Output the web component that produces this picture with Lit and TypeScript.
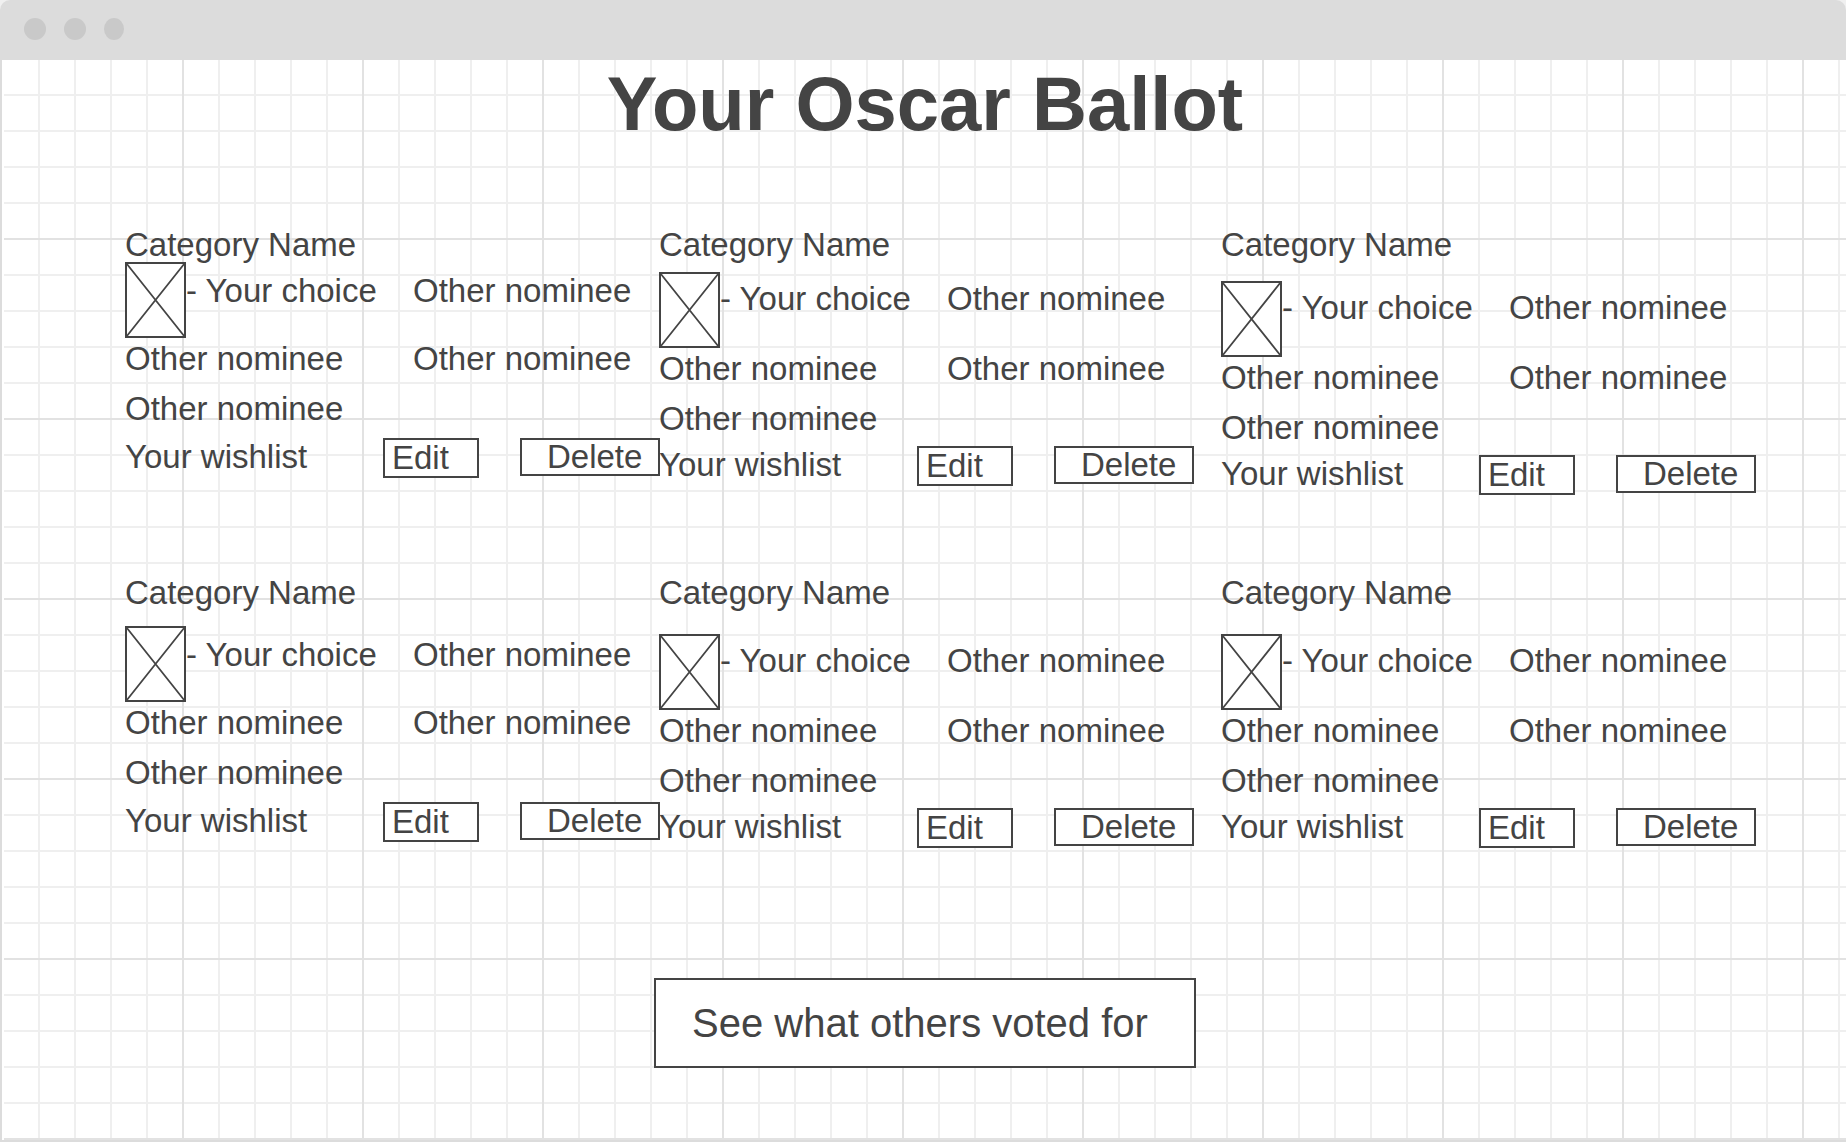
import { LitElement, html, css } from "lit";
import { customElement, property } from "lit/decorators.js";

type Spacing = "tight" | "close" | "medium" | "roomy" | "wide";

interface Category {
  name: string;
  spacing: Spacing;
}

const CATEGORIES: Category[] = [
  { name: "Category Name", spacing: "tight" },
  { name: "Category Name", spacing: "close" },
  { name: "Category Name", spacing: "roomy" },
  { name: "Category Name", spacing: "medium" },
  { name: "Category Name", spacing: "wide" },
  { name: "Category Name", spacing: "wide" },
];

@customElement("ballot-card")
export class BallotCard extends LitElement {
  @property() name = "";
  @property() spacing: Spacing = "close";

  static styles = css`
    :host {
      display: block;
      min-width: 0;
      font-size: 33px;
      line-height: 38px;
      white-space: nowrap;
    }
    .name {
      margin: 0;
      font-size: inherit;
      font-weight: 400;
      line-height: 32px;
    }
    .body.tight { padding-top: 1px; }
    .body.close { padding-top: 11px; }
    .body.medium { padding-top: 17px; }
    .body.roomy { padding-top: 20px; }
    .body.wide { padding-top: 25px; }
    .nominees {
      display: grid;
      grid-template-columns: 288px auto;
      justify-content: start;
      row-gap: 12px;
    }
    .top {
      margin-bottom: 2px;
    }
    .choice {
      display: flex;
    }
    .thumb {
      display: block;
      flex: none;
      width: 61px;
      height: 76px;
    }
    .text {
      margin: 0;
    }
    .top .text,
    .actions {
      padding-top: 8px;
    }
    .tight .top .text,
    .medium .top .text,
    .tight .actions,
    .medium .actions {
      padding-top: 10px;
    }
    .actions {
      display: flex;
      align-items: flex-start;
    }
    .wishlist {
      flex: none;
      width: 258px;
    }
    button {
      flex: none;
      box-sizing: border-box;
      margin: 0;
      border: 2px solid #444;
      border-radius: 0;
      background: #fff;
      color: inherit;
      font: inherit;
      text-align: left;
      cursor: pointer;
    }
    .edit {
      width: 96px;
      margin-right: 41px;
      padding: 0 0 0 7px;
      line-height: 36px;
    }
    .delete {
      width: 140px;
      padding: 0 0 0 25px;
      line-height: 34px;
    }
  `;

  render() {
    return html`
      <h2 class="name">${this.name}</h2>
      <div class="body ${this.spacing}">
        <div class="nominees top">
          <div class="choice">
            <svg class="thumb" viewBox="0 0 61 76" aria-hidden="true">
              <rect x="1" y="1" width="59" height="74" fill="#fff" stroke="#444" stroke-width="2" />
              <path d="M1.5 1.5 59.5 74.5M59.5 1.5 1.5 74.5" fill="none" stroke="#444" stroke-width="1.8" />
            </svg>
            <p class="text">- Your choice</p>
          </div>
          <p class="text">Other nominee</p>
        </div>
        <div class="nominees">
          <p class="text">Other nominee</p>
          <p class="text">Other nominee</p>
          <p class="text">Other nominee</p>
        </div>
        <div class="actions">
          <span class="wishlist">Your wishlist</span>
          <button class="edit" type="button">Edit</button>
          <button class="delete" type="button">Delete</button>
        </div>
      </div>
    `;
  }
}

@customElement("app-root")
export class AppRoot extends LitElement {
  static styles = css`
    :host {
      display: flex;
      flex-direction: column;
      min-height: 100vh;
      background: #f0f0f0;
      color: #444;
      font-family: "Liberation Sans", Arial, sans-serif;
    }
    .bar {
      height: 60px;
      border-radius: 10px 10px 0 0;
      background: #dcdcdc;
    }
    .dots {
      display: block;
      width: 140px;
      height: 60px;
    }
    .canvas {
      flex: 1;
      display: flex;
      flex-direction: column;
      align-items: center;
      padding-left: 2px;
      border-left: 2px solid #dcdcdc;
      border-bottom: 2px solid #dcdcdc;
      background:
        linear-gradient(#fff, #fff) 0 0 / 2px 100% no-repeat,
        linear-gradient(90deg, #e2e2e2 2px, transparent 2px) 0 0 / 180px 180px,
        linear-gradient(#e2e2e2 2px, transparent 2px) 0 -2px / 180px 180px,
        linear-gradient(90deg, #efefef 2px, transparent 2px) 0 0 / 36px 36px,
        linear-gradient(#efefef 2px, transparent 2px) 0 -2px / 36px 36px,
        #fff;
    }
    .title {
      margin: 0;
      font-size: 76px;
      font-weight: 700;
      line-height: 88px;
    }
    .categories {
      align-self: stretch;
      display: grid;
      grid-template-columns: minmax(0, 534fr) minmax(0, 562fr) minmax(0, 625fr);
      row-gap: 82px;
      padding: 81px 0 130px 121px;
    }
    .others {
      margin: 0;
      padding: 0 46px 0 36px;
      border: 2px solid #444;
      border-radius: 0;
      background: #fff;
      color: inherit;
      font: inherit;
      font-size: 40px;
      line-height: 86px;
      cursor: pointer;
    }
  `;

  render() {
    return html`
      <div class="bar">
        <svg class="dots" viewBox="0 0 140 60" fill="#c9c9c9" aria-hidden="true">
          <circle cx="35" cy="29" r="11" />
          <circle cx="75" cy="29" r="11" />
          <ellipse cx="114" cy="29" rx="10" ry="11" />
        </svg>
      </div>
      <main class="canvas">
        <h1 class="title">Your Oscar Ballot</h1>
        <div class="categories">
          ${CATEGORIES.map(
            (c) => html`<ballot-card .name=${c.name} .spacing=${c.spacing}></ballot-card>`,
          )}
        </div>
        <button class="others" type="button">See what others voted for</button>
      </main>
    `;
  }
}
